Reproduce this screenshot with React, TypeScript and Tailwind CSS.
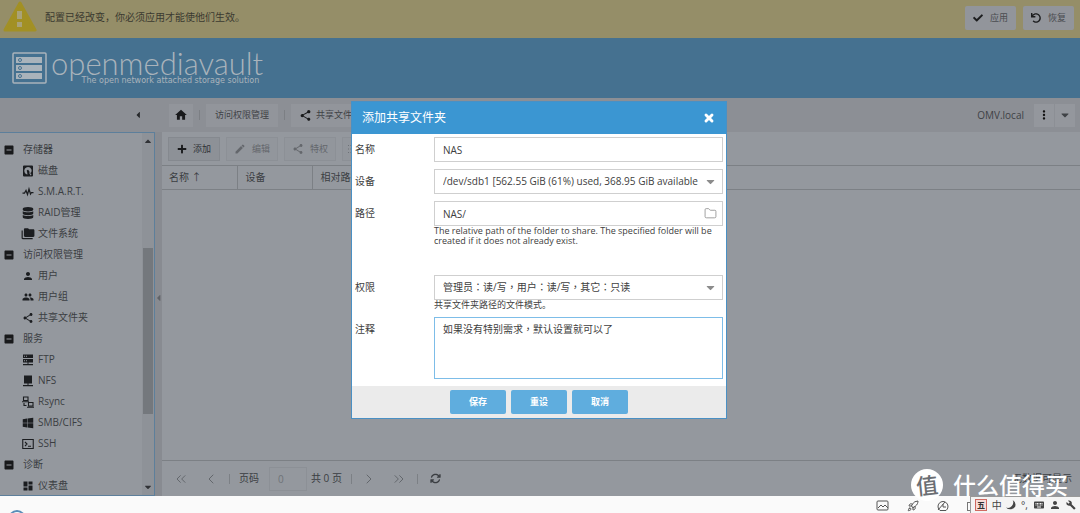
import { useState, type ReactNode } from "react";
import {
  FaCaretDown,
  FaCaretLeft,
  FaCaretUp,
  FaCheck,
  FaDatabase,
  FaPlus,
  FaUndo,
  FaWindows,
} from "react-icons/fa";
import { FaXmark, FaArrowsRotate } from "react-icons/fa6";
import {
  MdBuild,
  MdDashboard,
  MdEdit,
  MdFolderCopy,
  MdGroup,
  MdHome,
  MdIndeterminateCheckBox,
  MdKeyboard,
  MdMoreVert,
  MdPerson,
  MdShare,
} from "react-icons/md";
import {
  ChevronLeft,
  ChevronRight,
  ChevronsLeft,
  ChevronsRight,
  Folder,
  List,
  Rocket,
} from "lucide-react";

const ICON = "size-3 shrink-0";

function DiskIcon() {
  return (
    <svg viewBox="0 0 24 24" className={ICON} fill="currentColor">
      <path
        fillRule="evenodd"
        d="M4 1h16a2 2 0 0 1 2 2v18a2 2 0 0 1-2 2H4a2 2 0 0 1-2-2V3a2 2 0 0 1 2-2Zm8 3a7.500 7.500 0 0 0-7 10c1 3 3 4.500 6 5l-1-6a2 2 0 1 1 3.500-1.500l4 5A7.500 7.500 0 0 0 12 4Zm2 11 3 6 2-1.500-4-5Z"
      />
    </svg>
  );
}

function PulseIcon() {
  return (
    <svg viewBox="0 0 24 24" className={ICON} fill="none" stroke="currentColor" strokeWidth="2.5">
      <path d="M1 14h4l3-5 3 8 3-11 3 10 2-3h4" />
    </svg>
  );
}

function FtpIcon() {
  return (
    <svg viewBox="0 0 24 24" className={ICON} fill="currentColor">
      <path
        fillRule="evenodd"
        d="M2 1h20v7H2Zm2 2.500v2h2v-2Zm4 0v2h2v-2ZM2 10h20v7H2Zm2 2.500v2h2v-2Zm4 0v2h2v-2ZM11 17h2v3h9v2.500H2V20h9Z"
      />
    </svg>
  );
}

function NfsIcon() {
  return (
    <svg viewBox="0 0 24 24" className={ICON} fill="currentColor">
      <path d="M4 1h16v16h-7v3h9v2.500H2V20h9v-3H4Z" />
    </svg>
  );
}

function RsyncIcon() {
  return (
    <svg viewBox="0 0 24 24" className={ICON} fill="none" stroke="currentColor" strokeWidth="2.200">
      <path d="M3 2h9v7H3ZM0 11.500h14M13 13h9v7h-9ZM10 22.500h14M4 14v5h5" />
    </svg>
  );
}

function TerminalIcon() {
  return (
    <svg viewBox="0 0 24 24" className={ICON} fill="none" stroke="currentColor" strokeWidth="2.200">
      <path d="M1.500 3h21v18h-21ZM6 8l4 4-4 4M12 16.500h6" />
    </svg>
  );
}

interface TreeGroup {
  label: string;
  items: { label: string; icon: ReactNode }[];
}

const tree: TreeGroup[] = [
  {
    label: "存储器",
    items: [
      { label: "磁盘", icon: <DiskIcon /> },
      { label: "S.M.A.R.T.", icon: <PulseIcon /> },
      { label: "RAID管理", icon: <FaDatabase className={ICON} /> },
      { label: "文件系统", icon: <MdFolderCopy className="-mx-px size-[14px] shrink-0" /> },
    ],
  },
  {
    label: "访问权限管理",
    items: [
      { label: "用户", icon: <MdPerson className={ICON} /> },
      { label: "用户组", icon: <MdGroup className={ICON} /> },
      { label: "共享文件夹", icon: <MdShare className={ICON} /> },
    ],
  },
  {
    label: "服务",
    items: [
      { label: "FTP", icon: <FtpIcon /> },
      { label: "NFS", icon: <NfsIcon /> },
      { label: "Rsync", icon: <RsyncIcon /> },
      { label: "SMB/CIFS", icon: <FaWindows className={ICON} /> },
      { label: "SSH", icon: <TerminalIcon /> },
    ],
  },
  {
    label: "诊断",
    items: [{ label: "仪表盘", icon: <MdDashboard className={ICON} /> }],
  },
];

function Banner() {
  return (
    <div className="flex h-[38px] shrink-0 items-center bg-[#958e68] pr-[6px] pb-[3px] pl-[3px]">
      <svg viewBox="0 0 34 32" className="mr-2 h-8 w-[34px] shrink-0 self-start">
        <path d="M17 3 32 30H2Z" fill="#a29024" stroke="#a29024" strokeWidth="3" strokeLinejoin="round" />
        <path d="M14 11h5v8h-5ZM14 22h5v5h-5Z" fill="#a9a278" />
      </svg>
      <p className="flex-1 text-[10px] text-[#3b3a30]">配置已经改变，你必须应用才能使他们生效。</p>
      <div className="flex gap-[7px] text-[9px] text-[#4a4c50]">
        <button className="flex h-6 w-[51px] items-center justify-center gap-[7px] rounded-xs bg-[#92959b]">
          <FaCheck className="size-[10px] text-[#1c1d1f]" />
          应用
        </button>
        <button className="flex h-6 w-[51px] items-center justify-center gap-[7px] rounded-xs bg-[#92959b]">
          <FaUndo className="size-[10px] text-[#1c1d1f]" />
          恢复
        </button>
      </div>
    </div>
  );
}

function Header() {
  return (
    <header className="flex h-[60px] shrink-0 items-center bg-[#457190] pl-3 text-[#a9b3bb]">
      <svg viewBox="0 0 35 32" className="h-8 w-[35px] shrink-0" fill="none" stroke="#a9b3bb">
        <rect x="1" y="1" width="33" height="30" rx="1" strokeWidth="1.5" />
        <path d="M4 5h26v6H4ZM4 13h26v6H4ZM4 21h26v6H4Z" fill="#a9b3bb" stroke="none" />
        <g stroke="#457190">
          <circle cx="8" cy="8" r="1.5" />
          <circle cx="8" cy="16" r="1.5" />
          <circle cx="8" cy="24" r="1.5" />
        </g>
      </svg>
      <div className="ml-1 flex flex-col items-end gap-[2px]">
        <span className="font-[Lato] text-[31px] leading-6 font-light">openmediavault</span>
        <span className="pr-1 font-['DejaVu_Sans'] text-[8px] leading-2">
          The open network attached storage solution
        </span>
      </div>
    </header>
  );
}

function Breadcrumb() {
  return (
    <nav className="flex h-[34px] shrink-0 items-center bg-[#8c8f95] pr-[5px] text-[9px] text-[#3f4246]">
      <div className="flex w-[169px] shrink-0 justify-end pr-[26px]">
        <button aria-label="折叠">
          <FaCaretLeft className="size-[10px] text-[#26282b]" />
        </button>
      </div>
      <button aria-label="主页" className="flex h-[23px] w-6 items-center justify-center bg-[#92959b] text-[#18191b]">
        <MdHome className="size-[14px]" />
      </button>
      <span className="mx-[6px] h-[10px] w-px bg-[#7c7f84]" />
      <button className="h-[23px] bg-[#92959b] px-[9px]">访问权限管理</button>
      <span className="mx-[6px] h-[10px] w-px bg-[#7c7f84]" />
      <button className="flex h-[23px] items-center gap-1 bg-[#92959b] px-2">
        <MdShare className="size-[13px] text-[#18191b]" />
        共享文件夹
      </button>
      <span className="mr-[10px] ml-auto text-[10px]">OMV.local</span>
      <button aria-label="更多" className="flex h-[23px] w-5 items-center justify-center bg-[#94979d] text-[#111]">
        <MdMoreVert className="size-[14px]" />
      </button>
      <button aria-label="菜单" className="ml-px flex h-[23px] w-5 items-center justify-center bg-[#94979d]">
        <FaCaretDown className="size-3" />
      </button>
    </nav>
  );
}

function Sidebar() {
  return (
    <aside className="flex w-[155px] shrink-0 overflow-hidden border border-l-0 border-[#5d7f9b] bg-[#94989e]">
      <ul className="min-w-0 flex-1 pt-[6px] text-[10px] text-[#3b3e42]">
        {tree.map((group) => (
          <li key={group.label}>
            <div className="flex h-[21px] items-center gap-2 pl-[3px]">
              <MdIndeterminateCheckBox className="size-3 text-[#18191b]" />
              {group.label}
            </div>
            <ul>
              {group.items.map((item) => (
                <li key={item.label} className="h-[21px] pl-[22px]">
                  <a href="#" className="flex h-full items-center gap-1">
                    <span className="text-[#1b1d20]">{item.icon}</span>
                    {item.label}
                  </a>
                </li>
              ))}
            </ul>
          </li>
        ))}
      </ul>
      <div className="flex w-3 shrink-0 flex-col items-center bg-[#8e9298] text-[#303236]">
        <FaCaretUp className="mt-[3px] size-[10px]" />
        <div className="mt-auto h-[166px] w-[10px] bg-[#74787d]" />
        <FaCaretDown className="mt-[68px] mb-[3px] size-[10px]" />
      </div>
    </aside>
  );
}

function ToolButton({ icon, label, disabled }: { icon: ReactNode; label: string; disabled?: boolean }) {
  return (
    <button
      disabled={disabled}
      className="flex h-6 w-[52px] shrink-0 items-center justify-center gap-[6px] border border-[#85898f] bg-[#8d9197] text-[#303236] disabled:border-[#8c9096] disabled:bg-[#92969c] disabled:text-[#64676c]"
    >
      {icon}
      {label}
    </button>
  );
}

function Grid() {
  return (
    <main className="flex min-w-0 flex-1 flex-col bg-[#94989e] text-[#3b3e42]">
      <div className="flex h-[33px] shrink-0 items-center gap-[6px] pl-[6px] text-[9px]">
        <ToolButton icon={<FaPlus className="size-[10px] text-[#18191b]" />} label="添加" />
        <ToolButton icon={<MdEdit className="size-3" />} label="编辑" disabled />
        <ToolButton icon={<MdShare className="size-3" />} label="特权" disabled />
        <button
          disabled
          aria-label="访问控制列表"
          className="flex h-6 w-[52px] items-center border border-[#8c9096] bg-[#92969c] pl-1 text-[#64676c]"
        >
          <List className="size-3" />
        </button>
      </div>
      <table className="w-full table-fixed border-y border-[#7c8085] text-left text-[10px]">
        <thead>
          <tr className="h-6">
            <th className="w-[75px] border-r border-[#7c8085] pl-[7px] font-normal">名称 ↑</th>
            <th className="w-[75px] border-r border-[#7c8085] pl-2 font-normal">设备</th>
            <th className="pl-2 font-normal">相对路径</th>
          </tr>
        </thead>
      </table>
      <footer className="mt-auto flex h-9 shrink-0 items-center border-t border-[#7c8085] px-2 text-[10px]">
        <button aria-label="第一页" className="mr-[14px] ml-[3px] text-[#63676c]">
          <ChevronsLeft className="size-4" strokeWidth={1.5} />
        </button>
        <button aria-label="上一页" className="mr-[10px] text-[#63676c]">
          <ChevronLeft className="size-4" strokeWidth={1.5} />
        </button>
        <span className="mr-[9px] h-[10px] w-px bg-[#7c8085]" />
        <label htmlFor="page">页码</label>
        <input
          id="page"
          defaultValue="0"
          className="mr-1 ml-[10px] h-6 w-[38px] border border-[#8c9096] pl-2 text-[#6f7378]"
          disabled
        />
        <span>共 0 页</span>
        <span className="mx-[9px] h-[10px] w-px bg-[#7c8085]" />
        <button aria-label="下一页" className="mr-[14px] text-[#63676c]">
          <ChevronRight className="size-4" strokeWidth={1.5} />
        </button>
        <button aria-label="最后一页" className="mr-[10px] text-[#63676c]">
          <ChevronsRight className="size-4" strokeWidth={1.5} />
        </button>
        <span className="mr-3 h-[10px] w-px bg-[#7c8085]" />
        <button aria-label="刷新">
          <FaArrowsRotate className="size-[11px]" />
        </button>
        <span className="ml-auto">无数据可显示</span>
      </footer>
    </main>
  );
}

const FIELD = "w-full border border-[#cfcfcf] bg-white px-2 text-[10px] text-[#404040] outline-none";

function Field({ id, label, hint, children }: { id: string; label: string; hint?: string; children: ReactNode }) {
  return (
    <div className="flex">
      <label htmlFor={id} className="w-[79px] shrink-0 pt-1 leading-4">
        {label}
      </label>
      <div className="min-w-0 flex-1">
        <div className="relative">{children}</div>
        {hint && <p className="text-[9px] leading-[10px]">{hint}</p>}
      </div>
    </div>
  );
}

function ShareDialog() {
  const [name, setName] = useState("NAS");
  const [path, setPath] = useState("NAS/");
  const [comment, setComment] = useState("如果没有特别需求，默认设置就可以了");

  return (
    <div className="fixed inset-0 flex items-start justify-center pt-[101px] pr-[2px]">
      <form
        role="dialog"
        aria-labelledby="dialog-title"
        className="w-[376px] border border-[#4a90c4] bg-white text-[10px] text-[#404040]"
      >
        <div className="flex h-8 items-center justify-between bg-[#3b96d2] pr-[11px] pl-[10px] text-white">
          <h2 id="dialog-title" className="text-[12px]">添加共享文件夹</h2>
          <button type="button" aria-label="关闭">
            <FaXmark className="size-3" strokeWidth={60} stroke="currentColor" />
          </button>
        </div>
        <div className="flex flex-col gap-[7px] px-[3px] pt-[3px] pb-[7px]">
          <Field id="name" label="名称">
            <input id="name" value={name} onChange={(e) => setName(e.target.value)} className={`${FIELD} h-[25px]`} />
          </Field>
          <Field id="device" label="设备">
            <select id="device" className={`${FIELD} h-[25px] appearance-none pr-6`}>
              <option>/dev/sdb1 [562.55 GiB (61%) used, 368.95 GiB available</option>
            </select>
            <FaCaretDown className="pointer-events-none absolute top-[6px] right-[6px] size-[13px] text-[#8c8c8c]" />
          </Field>
          <div className="pb-[22px]">
            <Field
              id="path"
              label="路径"
              hint="The relative path of the folder to share. The specified folder will be created if it does not already exist."
            >
              <input id="path" value={path} onChange={(e) => setPath(e.target.value)} className={`${FIELD} h-[25px]`} />
              <Folder className="absolute top-[6px] right-[6px] size-[13px] text-[#8c8c8c]" strokeWidth={1.5} />
            </Field>
          </div>
          <Field id="mode" label="权限" hint="共享文件夹路径的文件模式。">
            <select
              id="mode"
              className={`${FIELD} h-[25px] appearance-none pr-6 font-['Open_Sans','Noto_Sans_CJK_TC',sans-serif]`}
            >
              <option>管理员：读/写，用户：读/写，其它：只读</option>
            </select>
            <FaCaretDown className="pointer-events-none absolute top-[6px] right-[6px] size-[13px] text-[#8c8c8c]" />
          </Field>
          <Field id="comment" label="注释">
            <textarea
              id="comment"
              value={comment}
              onChange={(e) => setComment(e.target.value)}
              className="block h-[62px] w-full resize-none border border-[#7dbde8] px-2 py-[3px] font-['Open_Sans','Noto_Sans_CJK_TC',sans-serif] leading-4 outline-none"
            />
          </Field>
        </div>
        <div className="flex h-8 items-center justify-center gap-[5px] bg-[#ebebeb] text-[9px] font-bold text-white">
          <button type="submit" className="h-6 w-14 rounded-xs bg-[#5fadde]">保存</button>
          <button type="reset" className="h-6 w-14 rounded-xs bg-[#5fadde]">重设</button>
          <button type="button" className="h-6 w-14 rounded-xs bg-[#5fadde]">取消</button>
        </div>
      </form>
    </div>
  );
}

function Taskbar() {
  return (
    <div className="flex h-[17px] shrink-0 items-start overflow-hidden bg-[#fafafa] pl-2 text-[#555]">
      <span className="mt-[14px] size-[18px] shrink-0 rounded-full border-2 border-[#5a8db8]" />
      <div className="ml-auto flex h-full items-center gap-[18px] pt-[3px]">
        <svg viewBox="0 0 13 12" className="h-3 w-[13px]" fill="none" stroke="currentColor">
          <rect x="1" y="1" width="11" height="9" rx="1" />
          <path d="m2 8 3-3 2 2 2-2 3 3" />
        </svg>
        <Rocket className="size-3" />
        <svg viewBox="0 0 12 12" className="size-3" fill="none" stroke="currentColor">
          <path d="M3 10.500a5 5 0 1 1 6 0ZM1 10 8 2M6 4v3h3" />
        </svg>
        <span className="h-[9px] w-[3px] border border-r-0 border-[#777]" />
      </div>
      <div className="flex h-full w-[110px] shrink-0 items-center justify-between border-t border-l border-[#999] bg-[#f4f4f4] pr-1 pl-1 text-[10px] leading-3 text-[#444]">
        <span className="flex h-3 w-3 items-center justify-center border border-[#d06a62] bg-[#f6dcd8] text-[8px] font-bold text-[#333]">
          五
        </span>
        <span>中</span>
        <svg viewBox="0 0 12 12" className="size-[10px]" fill="currentColor">
          <path d="M8 0a6.500 6.500 0 0 1-8 9 7 7 0 0 0 11-1A7 7 0 0 0 8 0Z" />
        </svg>
        <span>°,</span>
        <MdKeyboard className="size-3" />
        <MdPerson className="size-3" />
        <MdBuild className="size-[10px]" />
      </div>
    </div>
  );
}

function Watermark() {
  return (
    <div className="pointer-events-none absolute right-3 bottom-3 flex items-center gap-[10px] text-white">
      <span className="flex size-8 items-center justify-center rounded-full bg-white">
        <span className="-rotate-6 text-[22px] leading-none font-medium text-[#6b6e73]">值</span>
      </span>
      <span className="text-[23px] leading-8 font-medium">什么值得买</span>
    </div>
  );
}

export default function App() {
  return (
    <div className="relative flex h-screen flex-col overflow-hidden font-['Open_Sans','Noto_Sans_CJK_SC',sans-serif]">
      <Banner />
      <Header />
      <Breadcrumb />
      <div className="flex min-h-0 flex-1 bg-[#8c8f95]">
        <Sidebar />
        <div className="flex w-[7px] shrink-0 items-center justify-center bg-[#888b91] pb-8">
          <FaCaretLeft className="size-[10px] text-[#606368]" />
        </div>
        <Grid />
      </div>
      <Taskbar />
      <Watermark />
      <ShareDialog />
    </div>
  );
}
